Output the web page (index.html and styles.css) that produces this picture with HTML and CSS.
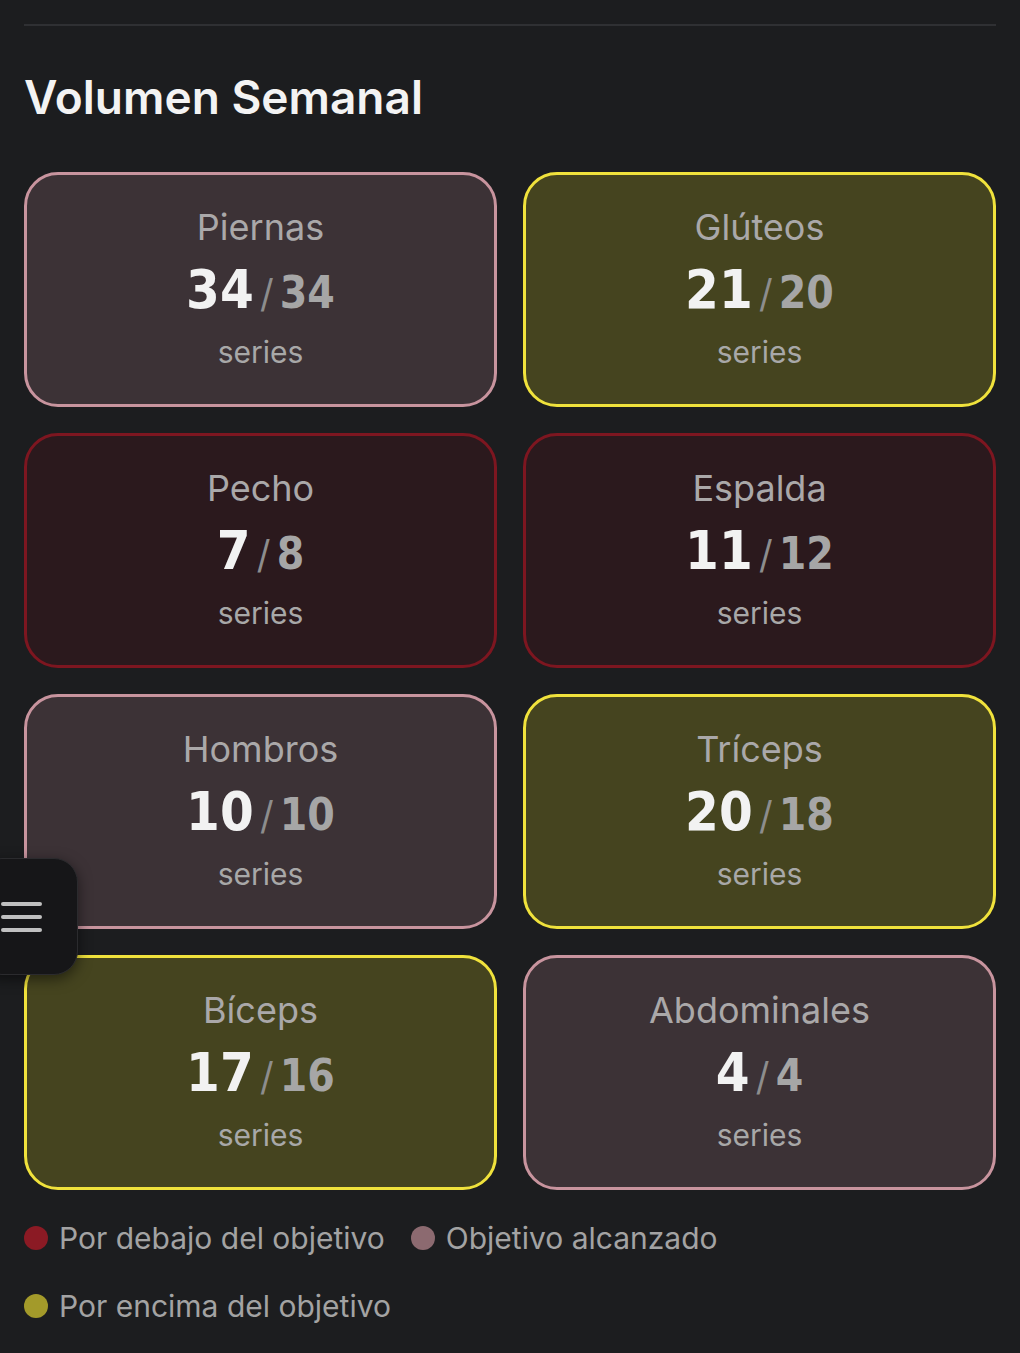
FILE: index.html
```html
<!DOCTYPE html>
<html lang="es">
<head>
<meta charset="utf-8">
<title>Volumen Semanal</title>
<link rel="stylesheet" href="styles.css">
</head>
<body>
<div class="page">
  <hr class="divider">
  <h2 class="title">Volumen Semanal</h2>
  <div class="grid">
    <div class="card card-ok"><div class="label">Piernas</div><div class="nums"><span class="done">34</span><span class="slash">/</span><span class="goal">34</span></div><div class="unit">series</div></div>
    <div class="card card-over"><div class="label">Glúteos</div><div class="nums"><span class="done">21</span><span class="slash">/</span><span class="goal">20</span></div><div class="unit">series</div></div>
    <div class="card card-under"><div class="label">Pecho</div><div class="nums"><span class="done">7</span><span class="slash">/</span><span class="goal">8</span></div><div class="unit">series</div></div>
    <div class="card card-under"><div class="label">Espalda</div><div class="nums"><span class="done">11</span><span class="slash">/</span><span class="goal">12</span></div><div class="unit">series</div></div>
    <div class="card card-ok"><div class="label">Hombros</div><div class="nums"><span class="done">10</span><span class="slash">/</span><span class="goal">10</span></div><div class="unit">series</div></div>
    <div class="card card-over"><div class="label">Tríceps</div><div class="nums"><span class="done">20</span><span class="slash">/</span><span class="goal">18</span></div><div class="unit">series</div></div>
    <div class="card card-over"><div class="label">Bíceps</div><div class="nums"><span class="done">17</span><span class="slash">/</span><span class="goal">16</span></div><div class="unit">series</div></div>
    <div class="card card-ok"><div class="label">Abdominales</div><div class="nums"><span class="done">4</span><span class="slash">/</span><span class="goal">4</span></div><div class="unit">series</div></div>
  </div>
  <div class="legend">
    <div class="legend-item"><span class="dot dot-under"></span>Por debajo del objetivo</div>
    <div class="legend-item"><span class="dot dot-ok"></span>Objetivo alcanzado</div>
    <div class="legend-item"><span class="dot dot-over"></span>Por encima del objetivo</div>
  </div>
</div>
<button class="menu-btn" aria-label="Menú">
  <span class="bar"></span><span class="bar"></span><span class="bar"></span>
</button>
</body>
</html>
```
FILE: styles.css
```css
* { box-sizing: border-box; }
html, body {
  margin: 0;
  padding: 0;
  background: #1c1d1f;
}
body {
  font-family: Inter, "Noto Sans", "Liberation Sans", sans-serif;
  color: #f2f2f2;
}
.page {
  padding: 24px 24px 0;
}
.divider {
  margin: 0;
  border: 0;
  height: 2px;
  background: #2f3033;
}
.title {
  margin: 45px 0 49px;
  font-size: 46px;
  line-height: 52px;
  font-weight: 600;
  color: #f3f3f3;
}
.grid {
  display: grid;
  grid-template-columns: 1fr 1fr;
  gap: 26px;
}
.card {
  border: 3px solid;
  border-radius: 34px;
  padding: 32px 0 32px;
  display: flex;
  flex-direction: column;
  align-items: center;
  text-align: center;
}
.card-ok { background: #3c3236; border-color: #c8949e; }
.card-over { background: #45441f; border-color: #f0e23c; }
.card-under { background: #2b191d; border-color: #7d1620; }
.label {
  font-size: 36px;
  line-height: 40px;
  color: #aaa8a9;
}
.nums {
  display: flex;
  align-items: baseline;
  gap: 7px;
  height: 58px;
  margin-top: 16px;
  font-family: "DejaVu Sans Condensed", "DejaVu Sans", sans-serif;
  font-stretch: condensed;
}
.nums span { line-height: 1; }
.done {
  font-size: 54px;
  font-weight: 700;
  color: #f2f2f2;
}
.slash {
  font-size: 40px;
  font-weight: 400;
  color: #8d8d8d;
}
.goal {
  font-size: 44px;
  font-weight: 700;
  color: #a6a6a6;
}
.unit {
  margin-top: 11px;
  font-size: 30px;
  line-height: 40px;
  color: #a8a8a8;
}
.legend {
  display: flex;
  flex-wrap: wrap;
  column-gap: 26px;
  row-gap: 32px;
  padding: 30px 0 30px;
}
.legend-item {
  display: flex;
  align-items: center;
  gap: 11px;
  font-size: 30px;
  line-height: 36px;
  color: #a3a3a3;
}
.dot {
  width: 24px;
  height: 24px;
  border-radius: 50%;
  flex: none;
}
.dot-under { background: #8b1a24; }
.dot-ok { background: #8c6a70; }
.dot-over { background: #a39a2a; }
.menu-btn {
  position: fixed;
  left: -22px;
  top: 858px;
  width: 100px;
  height: 117px;
  border-radius: 24px;
  background: #161618;
  border: 1px solid #2b2b2e;
  box-shadow: 0 4px 14px rgba(0,0,0,0.5);
  padding: 0 0 0 22px;
  display: flex;
  flex-direction: column;
  justify-content: center;
  align-items: flex-start;
  gap: 9px;
  cursor: pointer;
}
.bar {
  display: block;
  width: 41px;
  height: 4px;
  border-radius: 2px;
  background: #c0c0c0;
}
```
